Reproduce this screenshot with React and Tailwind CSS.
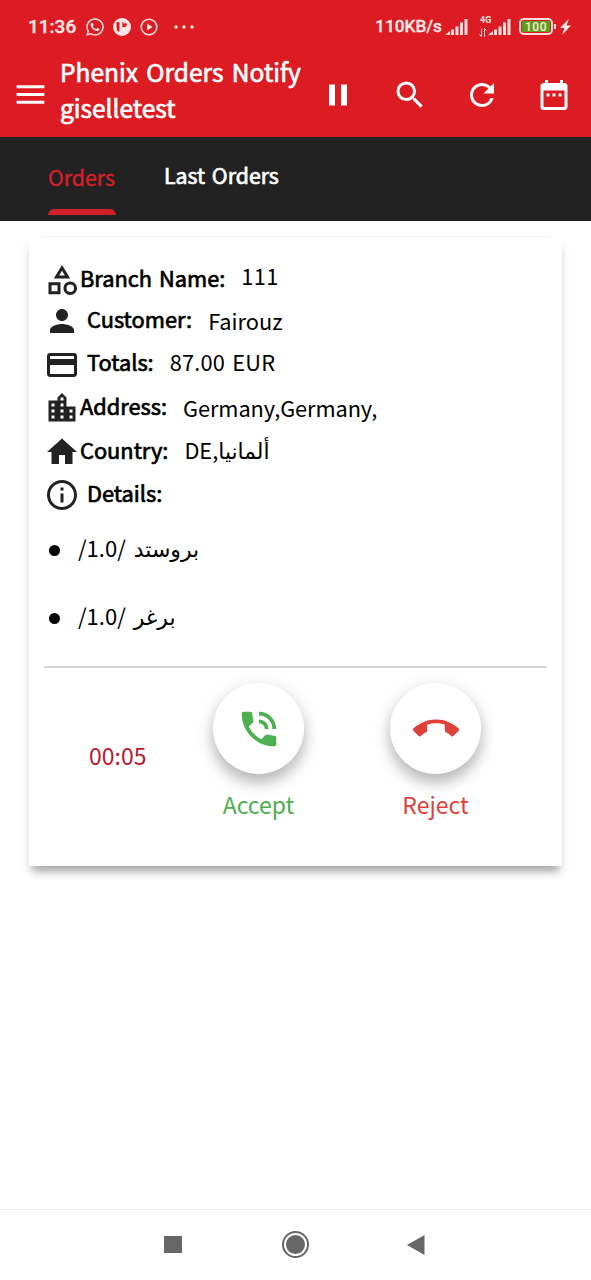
import React from 'react';
import {
  MdMenu, MdPause, MdSearch, MdRefresh, MdDateRange, MdOutlineCategory, MdPerson,
  MdPayment, MdLocationCity, MdHome, MdOutlineInfo, MdPhoneInTalk, MdCallEnd,
} from 'react-icons/md';
import { FaWhatsapp } from 'react-icons/fa';

function Signal() {
  return (
    <svg viewBox="0 0 23 16" className="h-4 w-[23px] shrink-0" fill="#ffdcdc">
      <path d="M0 16l5-4v4z" />
      <rect x="6" y="10.500" width="3" height="5.500" />
      <rect x="10.500" y="7.500" width="3" height="8.500" />
      <rect x="15" y="3.500" width="3" height="12.500" />
      <rect x="19.500" y="0" width="3" height="16" />
    </svg>
  );
}

function StatusBar() {
  return (
    <div className="flex h-[53px] items-center pl-7 font-[Roboto,sans-serif] text-[19px] font-medium leading-none text-[#ffe6e6]">
      <span className="w-[57px] [-webkit-text-stroke:0.3px]">11:36</span>
      <FaWhatsapp className="h-5 w-5 shrink-0" />
      <svg viewBox="0 0 18 18" className="ml-2 h-[18px] w-[18px] shrink-0">
        <circle cx="9" cy="9" r="9" fill="#ffe6e6" />
        <path d="M3.500 4.500q1.500-1.300 3-.5v9.500H5q-1.500-1.500-1.500-4z" fill="#dd1b23" />
        <path d="M9.300 4.200h1.200v1.300h2V4.200q2.500 2.300.5 4.300-1.500 1.200-3.700.5z" fill="#dd1b23" />
      </svg>
      <svg viewBox="0 0 18 18" className="ml-[9px] h-[18px] w-[18px] shrink-0">
        <circle cx="9" cy="9" r="7.800" fill="none" stroke="#ffe6e6" strokeWidth="1.500" />
        <path d="M7 5.500l5.500 3.500L7 12.500z" fill="#ffe6e6" />
      </svg>
      <svg viewBox="0 0 20 4" className="ml-4 h-1 w-5 shrink-0" fill="#ffe6e6">
        <circle cx="2" cy="2" r="1.700" />
        <circle cx="10" cy="2" r="1.700" />
        <circle cx="18" cy="2" r="1.700" />
      </svg>
      <span className="ml-auto mr-[3px] text-[17.300px] [-webkit-text-stroke:0.3px]">110KB/s</span>
      <Signal />
      <div className="ml-3 flex h-[21px] w-[8px] shrink-0 flex-col justify-between">
        <span className="text-[9px] font-bold leading-[8px]">4G</span>
        <svg viewBox="0 0 8 8" className="-ml-px h-[9px] w-2" fill="none" stroke="#ffdcdc" strokeWidth="1">
          <path d="M2.500 0v8M0.500 6l2 2M5.500 8V0M7.500 2l-2-2" />
        </svg>
      </div>
      <Signal />
      <div className="ml-2 flex h-[17px] w-[34px] shrink-0 items-center justify-center rounded-[5px] border-2 border-[#ffdcdc] p-px">
        <span className="flex h-full w-full items-center justify-center rounded-[2px] bg-[#5da015] text-[12px] tracking-[0.5px]">100</span>
      </div>
      <span className="ml-px h-[5px] w-[2px] bg-[#ffdcdc]" />
      <svg viewBox="0 0 10 16" className="ml-1 mr-5 h-4 w-[11px] shrink-0" fill="#ffe6e6" preserveAspectRatio="none">
        <path d="M8 0L0 9h4L2 16 10 6.500H6z" />
      </svg>
    </div>
  );
}

function AppBar() {
  return (
    <div className="flex h-[84px] items-center pb-px pl-3 text-white">
      <MdMenu className="h-[37px] w-[37px] shrink-0" />
      <h1 className="-mt-[9px] ml-[11px] w-[260px] whitespace-nowrap text-[24.500px] font-normal leading-9 [-webkit-text-stroke:0.7px] [word-spacing:3px]">
        Phenix Orders Notify
        <br />
        giselletest
      </h1>
      <div className="flex gap-9">
        <MdPause className="h-9 w-9" />
        <MdSearch className="h-9 w-9" />
        <MdRefresh className="h-9 w-9" />
        <MdDateRange className="h-9 w-9" />
      </div>
    </div>
  );
}

function Tabs() {
  return (
    <div className="flex h-[84px] bg-[#222222] pl-12 text-[21.300px] leading-8">
      <div className="flex w-[68px] flex-col justify-between pb-[6px] pt-6 text-[#d2202a]">
        <span className="[-webkit-text-stroke:0.5px]">Orders</span>
        <span className="h-[6px] rounded-t-[6px] bg-[#d2202a]" />
      </div>
      <span className="ml-12 pt-[22px] text-white [-webkit-text-stroke:0.7px] [word-spacing:2px]">Last Orders</span>
    </div>
  );
}

function Row({ icon: Icon, label, value, iconClass = '', labelClass = '', valueClass = '' }) {
  return (
    <div className="flex h-[43.5px] items-center text-[21.800px] leading-8 text-black">
      <Icon className={'h-9 w-9 shrink-0 text-[#222222] ' + iconClass} />
      <span className={'whitespace-nowrap [-webkit-text-stroke:0.7px] [word-spacing:2px] ' + labelClass}>{label}</span>
      <span className={'ml-4 whitespace-nowrap ' + valueClass}>{value}</span>
    </div>
  );
}

function Detail({ children }) {
  return (
    <li className="flex h-[68px] items-center pl-[5px] text-[22px] leading-8 text-black">
      <span className="mr-[18px] mt-1 h-[11px] w-[11px] rounded-full bg-black" />
      <span dir="ltr" className="-mt-[3px] [word-spacing:3px]">/1.0/ {children}</span>
    </li>
  );
}

function CallButton({ icon: Icon, label, color }) {
  return (
    <div className={'flex w-[91px] flex-col items-center ' + color}>
      <button className="flex h-[91px] w-[91px] items-center justify-center rounded-full bg-white shadow-[0_9px_15px_rgba(0,0,0,0.25),0_2px_20px_rgba(0,0,0,0.08)]">
        <Icon className="h-[46px] w-[46px]" />
      </button>
      <span className="mt-[14px] text-[23px] leading-8">{label}</span>
    </div>
  );
}

export default function App() {
  return (
    <div className="flex h-[1280px] w-[591px] flex-col bg-white font-['Noto_Sans_CJK_SC','DejaVu_Sans',sans-serif]">
      <header className="bg-[#dd1b23]">
        <StatusBar />
        <AppBar />
      </header>
      <Tabs />
      <main className="flex-1 px-[29px] pt-[15px]">
        <div className="mx-3 mb-px h-px bg-[#f5f5f5]" />
        <section className="flex h-[628px] flex-col bg-white px-[15px] pt-[18px] shadow-[0_9px_8px_-4px_rgba(0,0,0,0.27),0_7px_9px_rgba(0,0,0,0.1)]">
          <Row icon={MdOutlineCategory} label="Branch Name:" value="111" iconClass="mt-[5px]" labelClass="" valueClass="-mt-1 tracking-[0.3px]" />
          <Row icon={MdPerson} label="Customer:" value="Fairouz" labelClass="ml-[7px] -mt-[5px]" valueClass="" />
          <Row icon={MdPayment} label="Totals:" value="87.00 EUR" labelClass="ml-[7px] -mt-[6px]" valueClass="-mt-[5px] tracking-[0.2px] [word-spacing:2px]" />
          <Row icon={MdLocationCity} label="Address:" value="Germany,Germany," labelClass="-mt-[5px]" valueClass="tracking-[-0.1px]" />
          <Row icon={MdHome} label="Country:" value={'DE,ألمانيا'} labelClass="-mt-1" valueClass="-mt-1" />
          <Row icon={MdOutlineInfo} label="Details:" value="" labelClass="ml-[7px] -mt-[5px]" />
          <ul className="-mt-[3px]">
            <Detail>بروستد</Detail>
            <Detail>برغر</Detail>
          </ul>
          <div className="mt-4 h-[2px] shrink-0 bg-[#d6d6d6]" />
          <div className="flex pt-[15px]">
            <span className="ml-[45px] mt-[56px] w-[124px] text-[23px] leading-8 text-[#b9182f]">00:05</span>
            <CallButton icon={MdPhoneInTalk} label="Accept" color="text-[#4caf50]" />
            <div className="w-[86px]" />
            <CallButton icon={MdCallEnd} label="Reject" color="text-[#e0403a]" />
          </div>
        </section>
      </main>
      <nav className="flex h-[71px] items-center border-t border-[#eeeeee] pb-px pl-[164px]">
        <span className="h-[17px] w-[18px] bg-[#666666]" />
        <span className="ml-[100px] flex h-[27px] w-[27px] items-center justify-center rounded-full border-2 border-[#666666]">
          <span className="h-[19px] w-[19px] rounded-full bg-[#666666]" />
        </span>
        <svg viewBox="0 0 18 20" className="ml-[98px] h-5 w-[18px]" fill="#666666">
          <path d="M17.500 0v20L0 10z" />
        </svg>
      </nav>
    </div>
  );
}
